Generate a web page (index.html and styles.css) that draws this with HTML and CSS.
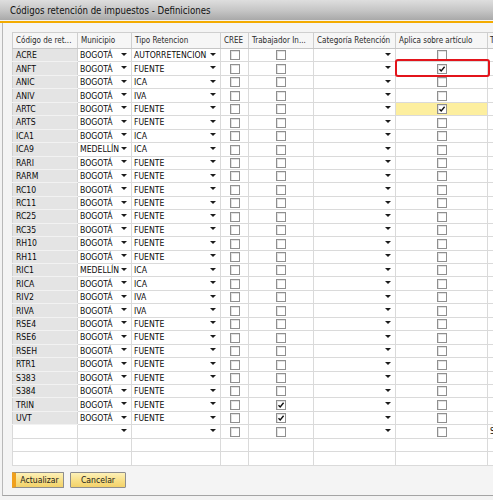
FILE: index.html
```html
<!DOCTYPE html>
<html>

<head>
	<meta charset="utf-8">
	<title>Códigos retención de impuestos - Definiciones</title>
	<link rel="stylesheet" href="styles.css">
</head>

<body>
	<div class="Window">
		<div class="TitleBar">Códigos retención de impuestos - Definiciones</div>
		<div class="Accent"></div>
		<div class="Content">
			<div class="GridWrap">
				<table class="Grid">
					<colgroup>
						<col class="c-code"><col class="c-mun"><col class="c-tipo"><col class="c-cree">
						<col class="c-trab"><col class="c-cat"><col class="c-apl"><col class="c-last">
					</colgroup>
					<thead>
						<tr>
							<th>Código de ret...</th>
							<th>Municipio</th>
							<th>Tipo Retencion</th>
							<th>CREE</th>
							<th>Trabajador In...</th>
							<th>Categoría Retención</th>
							<th>Aplica sobre artículo</th>
							<th class="Last">T</th>
						</tr>
					</thead>
					<tbody id="rows"></tbody>
				</table>
			</div>
			<div class="Buttons">
				<button class="Btn Default">Actualizar</button>
				<button class="Btn">Cancelar</button>
			</div>
		</div>
	</div>
	<div class="Mark"></div>

	<script>
	let data = [
		["ACRE", "BOGOTÁ", "AUTORRETENCION"],
		["ANFT", "BOGOTÁ", "FUENTE", 0, 0, 1],
		["ANIC", "BOGOTÁ", "ICA"],
		["ANIV", "BOGOTÁ", "IVA"],
		["ARTC", "BOGOTÁ", "FUENTE", 0, 0, 1, "hl"],
		["ARTS", "BOGOTÁ", "FUENTE"],
		["ICA1", "BOGOTÁ", "ICA"],
		["ICA9", "MEDELLÍN", "ICA"],
		["RARI", "BOGOTÁ", "FUENTE"],
		["RARM", "BOGOTÁ", "FUENTE"],
		["RC10", "BOGOTÁ", "FUENTE"],
		["RC11", "BOGOTÁ", "FUENTE"],
		["RC25", "BOGOTÁ", "FUENTE"],
		["RC35", "BOGOTÁ", "FUENTE"],
		["RH10", "BOGOTÁ", "FUENTE"],
		["RH11", "BOGOTÁ", "FUENTE"],
		["RIC1", "MEDELLÍN", "ICA"],
		["RICA", "BOGOTÁ", "ICA"],
		["RIV2", "BOGOTÁ", "IVA"],
		["RIVA", "BOGOTÁ", "IVA"],
		["RSE4", "BOGOTÁ", "FUENTE"],
		["RSE6", "BOGOTÁ", "FUENTE"],
		["RSEH", "BOGOTÁ", "FUENTE"],
		["RTR1", "BOGOTÁ", "FUENTE"],
		["S383", "BOGOTÁ", "FUENTE"],
		["S384", "BOGOTÁ", "FUENTE"],
		["TRIN", "BOGOTÁ", "FUENTE", 0, 1, 0],
		["UVT", "BOGOTÁ", "FUENTE", 0, 1, 0],
		["", "", "", 0, 0, 0, "new"]
	];

	let tick = `<svg viewBox="0 0 8 8" width="8" height="8"><path d="M1.5 4.2 L3.2 6 L6.6 1.8" fill="none" stroke="#111" stroke-width="1.4"/></svg>`;
	let box = (on) => `<span class="Check">${on ? tick : ""}</span>`;
	let drop = (txt) => `<div class="Drop"><span>${txt}</span><i class="Arrow"></i></div>`;

	let body = document.getElementById("rows");
	let html = "";
	data.forEach((r) => {
		let isNew = r[6] == "new";
		html += `
		<tr>
			<td class="Code ${isNew ? "Blank" : ""}">${r[0]}</td>
			<td>${drop(r[1])}</td>
			<td>${drop(r[2])}</td>
			<td class="Mid">${box(r[3])}</td>
			<td class="Mid">${box(r[4])}</td>
			<td>${drop("")}</td>
			<td class="Mid ${r[6] == "hl" ? "Hl" : ""}">${box(r[5])}</td>
			<td class="Last">${isNew ? "S" : ""}</td>
		</tr>`;
	});
	for (let i = 0; i < 2; i++) {
		html += `<tr class="Empty"><td></td><td></td><td></td><td></td><td></td><td></td><td></td><td></td></tr>`;
	}
	body.innerHTML = html;
	</script>
</body>

</html>
```

FILE: styles.css
```css
html, body {
	margin: 0;
	padding: 0;
	width: 493px;
	height: 500px;
	overflow: hidden;
	background: #f3f3f3;
	font-family: "DejaVu Sans Condensed", "DejaVu Sans", sans-serif;
	font-stretch: condensed;
	color: #0a0a0a;
}

.Window {
	height: 500px;
	display: flex;
	flex-flow: column;
}

.TitleBar {
	height: 20px;
	line-height: 21px;
	padding-left: 10px;
	font-size: 9.6px;
	color: #111;
	background: linear-gradient(180deg, #dedede, #c4c4c4 55%, #a9a9a9);
	white-space: nowrap;
}

.Accent {
	height: 2px;
	border-top: 1px solid #f4f4f4;
	background: #f3ab00;
}

.Content {
	flex: 1;
	margin-left: 2px;
	border-left: 1px solid #b8b8b8;
	border-bottom: 1px solid #a4a4a4;
	margin-bottom: 4px;
	background: #f4f4f4;
	padding: 9px 0 0 9px;
	overflow: hidden;
}

.GridWrap {
	overflow: hidden;
}

.Grid {
	table-layout: fixed;
	border-collapse: collapse;
	width: 520px;
	font-size: 8.6px;
}

.c-code { width: 65px; }
.c-mun { width: 54px; }
.c-tipo { width: 89px; }
.c-cree { width: 28px; }
.c-trab { width: 65px; }
.c-cat { width: 82px; }
.c-apl { width: 92px; }
.c-last { width: 45px; }

.Grid th {
	height: 15px;
	padding: 0 0 0 3px;
	font-size: 8px;
	font-weight: normal;
	text-align: left;
	color: #2a2a2a;
	background: #f6f6f6;
	border: 1px solid #cfcfcf;
	border-bottom-color: #c6c6c6;
	white-space: nowrap;
	overflow: hidden;
}

.Grid td {
	height: 12.45px;
	padding: 0;
	background: #fff;
	border: 1px solid #dadada;
	white-space: nowrap;
	overflow: hidden;
}

.Grid td.Code {
	background: #e4e4e4;
	border-color: #f2f2f2 #d2d2d2;
	padding-left: 3px;
}

.Grid td.Code.Blank {
	background: #fff;
	border-color: #dadada;
}

.Grid td.Hl {
	background: #fdef9f;
}

.Grid .Last {
	padding-left: 2px;
}

.Drop {
	display: flex;
	align-items: center;
	justify-content: space-between;
	padding: 0 4px 0 2px;
}

.Arrow {
	display: block;
	flex-shrink: 0;
	width: 0;
	height: 0;
	margin-top: -2px;
	border-top: 3px solid #1c1c1c;
	border-left: 3px solid transparent;
	border-right: 3px solid transparent;
}

.Mid {
	text-align: center;
}

.Check {
	display: inline-block;
	width: 8px;
	height: 8px;
	border: 1px solid #8f8f8f;
	background: #fff;
	vertical-align: middle;
	line-height: 0;
	box-shadow: inset 1px 1px 0 #e2e2e2;
}

.Buttons {
	display: flex;
	gap: 6px;
	margin-top: 6px;
}

.Btn {
	width: 52px;
	height: 16px;
	padding: 0;
	font-family: inherit;
	font-stretch: condensed;
	font-size: 8.6px;
	color: #1a1a1a;
	border: 1px solid #8e8e8e;
	border-radius: 1px;
	background: linear-gradient(180deg, #fdf1b8, #f8df86 55%, #f3d26a);
}

.Btn + .Btn {
	width: 56px;
}

.Default {
	border-left: 4px solid #f0a01c;
}

.Mark {
	position: absolute;
	left: 395px;
	top: 59px;
	width: 91px;
	height: 13.5px;
	border: 2.5px solid #e3141b;
	border-radius: 3px;
}
```
